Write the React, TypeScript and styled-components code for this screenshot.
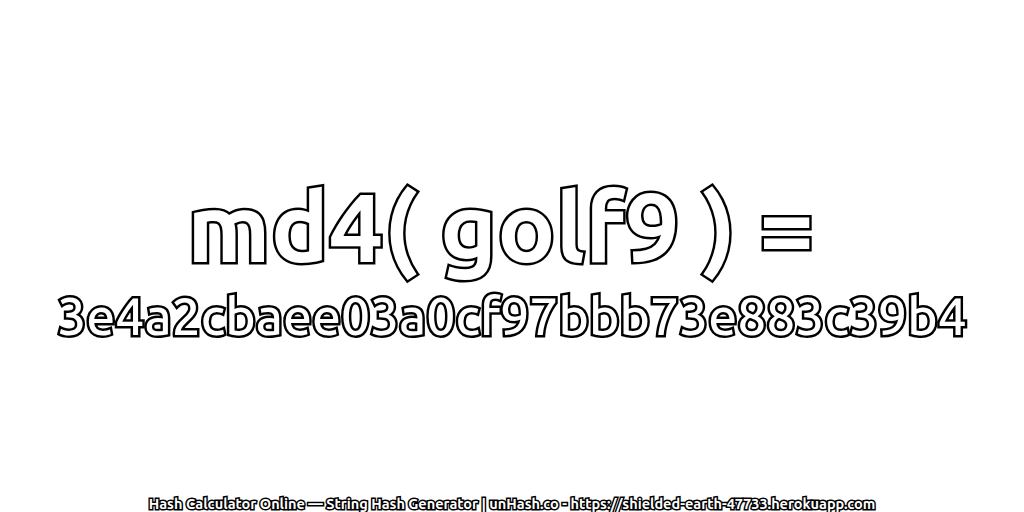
import { createGlobalStyle, styled } from 'styled-components';

const Global = createGlobalStyle`
  html, body {
    margin: 0;
    height: 100%;
    background: #fff;
  }
`;

const App = () => (
  <>
    <Global />
    <S.Page>
      <S.Main>
        <S.Title>{'md4( golf9 ) = '}</S.Title>
        <S.Hash>3e4a2cbaee03a0cf97bbb73e883c39b4</S.Hash>
      </S.Main>
      <S.Footer>Hash Calculator Online — String Hash Generator | unHash.co - https://shielded-earth-47733.herokuapp.com</S.Footer>
    </S.Page>
  </>
);

const S = {
  Page: styled.div`
    width: 1024px;
    height: 512px;
    display: flex;
    flex-direction: column;
    align-items: center;
    font-family: 'Ubuntu', 'Noto Sans', sans-serif;
    overflow: hidden;
  `,

  Main: styled.div`
    flex: 1;
    display: flex;
    flex-direction: column;
    align-items: center;
    padding-top: 171px;
  `,

  Title: styled.div`
    font-size: 97px;
    font-weight: 700;
    line-height: 110px;
    white-space: pre;
    color: #fff;
    -webkit-text-stroke: 5px #000;
    paint-order: stroke fill;
  `,

  Hash: styled.div`
    font-size: 51.6px;
    font-weight: 500;
    line-height: 71px;
    white-space: nowrap;
    color: #fff;
    -webkit-text-stroke: 5px #000;
    paint-order: stroke fill;
  `,

  Footer: styled.div`
    font-size: 14.5px;
    font-weight: 700;
    line-height: 18px;
    margin-bottom: -1px;
    white-space: nowrap;
    color: #fff;
    -webkit-text-stroke: 3px #000;
    paint-order: stroke fill;
  `,
};

export default App;
